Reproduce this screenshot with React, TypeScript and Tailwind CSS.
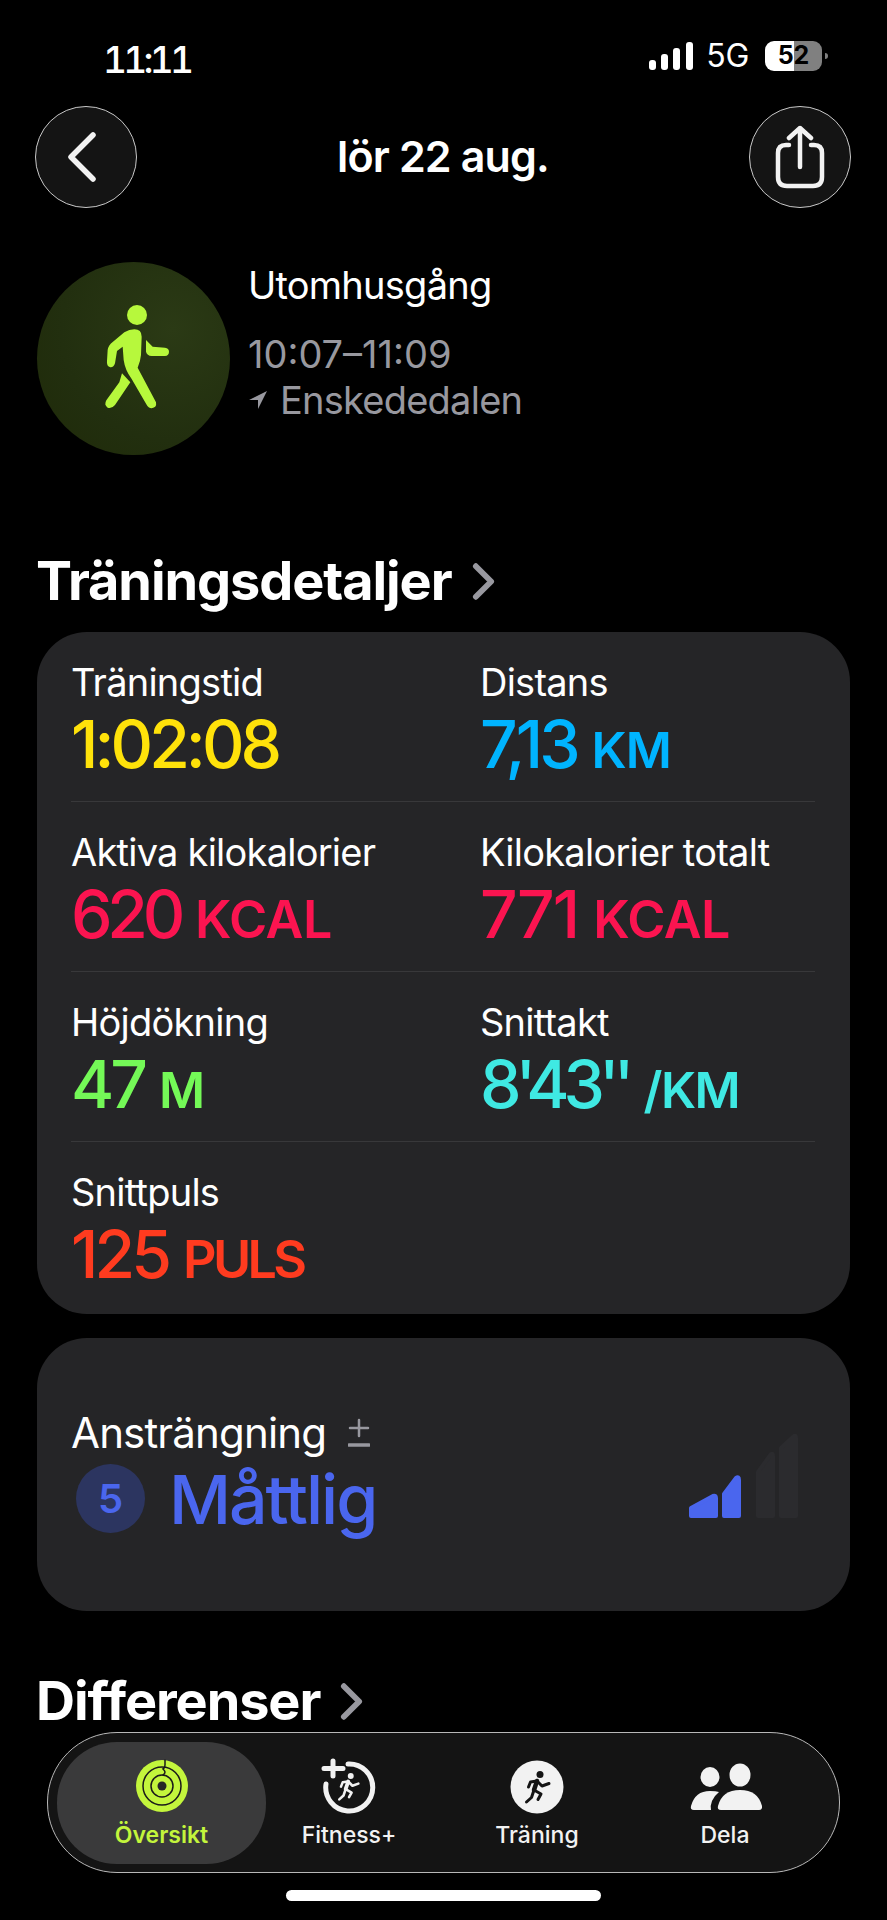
const font = "[font-family:Inter,'Liberation_Sans',sans-serif]";

interface Stat {
  label: string;
  value: string;
  valueClass?: string;
  unit?: string;
  unitClass?: string;
  color: string;
}

const rows: Stat[][] = [
  [
    { label: "Träningstid", value: "1:02:08", color: "text-[#ffe20a]" },
    { label: "Distans", value: "7,13", unit: "KM", unitClass: "text-[50px] tracking-[-0.02em]", color: "text-[#00b4ff]" },
  ],
  [
    { label: "Aktiva kilokalorier", value: "620", valueClass: "tracking-[-0.08em]", unit: "KCAL", color: "text-[#fb1450]" },
    { label: "Kilokalorier totalt", value: "771", valueClass: "tracking-[-0.03em]", unit: "KCAL", color: "text-[#fb1450]" },
  ],
  [
    { label: "Höjdökning", value: "47", unit: "M", unitClass: "text-[50px]", color: "text-[#74f957]" },
    { label: "Snittakt", value: "8'43''", valueClass: "tracking-[-0.09em]", unit: "/KM", unitClass: "text-[50px] tracking-[-0.03em]", color: "text-[#3fe9e3]" },
  ],
  [{ label: "Snittpuls", value: "125", unit: "PULS", unitClass: "text-[52px] tracking-[-0.07em]", color: "text-[#ff3b1f]" }],
];

function StatCell({ stat }: { stat: Stat }) {
  return (
    <div className="w-[409px] shrink-0">
      <div className="text-[38px] leading-[44px] tracking-[-0.02em] text-white">{stat.label}</div>
      <div className={`mt-[9px] flex h-[62px] items-baseline gap-[15px] leading-[62px] ${stat.color}`}>
        <span className={`text-[66px] font-medium ${stat.valueClass ?? "tracking-[-0.06em]"}`}>{stat.value}</span>
        {stat.unit && (
          <span className={`font-semibold ${stat.unitClass ?? "text-[52px] tracking-[-0.01em]"}`}>{stat.unit}</span>
        )}
      </div>
    </div>
  );
}

function Chevron({ className }: { className: string }) {
  return (
    <svg viewBox="0 0 24 38" className={className} fill="none" stroke="#98989f" strokeWidth="6" strokeLinecap="round" strokeLinejoin="round">
      <path d="M4 3 L20 19 L4 35" />
    </svg>
  );
}

function Runner({ color }: { color: string }) {
  return (
    <g fill="none" stroke={color} strokeWidth="3" strokeLinecap="round" strokeLinejoin="round">
      <circle cx="15" cy="3.5" r="3.5" fill={color} stroke="none" />
      <path d="M12 10 L9 19" strokeWidth="4.5" />
      <path d="M12 10 L5.5 11 L3.5 16" />
      <path d="M12 10 L17 15 L24 12.5" />
      <path d="M9 19 L16 23 L13 28.5" />
      <path d="M9 19 L6.5 26.5 L1.5 31" />
    </g>
  );
}

export default function App() {
  return (
    <div className={`relative h-[1920px] w-[887px] overflow-hidden bg-black ${font}`}>
      {/* status bar */}
      <div className="flex h-[106px] items-start justify-between pl-[103px] pr-[59px] pt-[38px]">
        <span className="text-[37px] font-medium tabular-nums leading-[44px] tracking-[-0.1em] text-white">11:11</span>
        <div className="flex items-center pt-[2px]">
          <svg width="44" height="28" viewBox="0 0 44 28" fill="white">
            <rect x="0" y="18" width="7" height="10" rx="3" />
            <rect x="12" y="12" width="7" height="16" rx="3" />
            <rect x="24" y="6" width="7" height="22" rx="3" />
            <rect x="37" y="0" width="7" height="28" rx="3" />
          </svg>
          <span className="ml-[13px] text-[32px] leading-[32px] tracking-[-0.01em] text-white">5G</span>
          <div className="ml-[16px] flex h-[30px] w-[57px] items-center justify-center rounded-[9px] bg-[linear-gradient(90deg,#fff_0,#fff_51%,#808080_51%,#808080_100%)] text-[25px] font-bold text-black">
            52
          </div>
          <div className="ml-[3px] h-[6px] w-[3px] rounded-r-full bg-[#808080]" />
        </div>
      </div>

      {/* nav */}
      <div className="flex h-[101px] items-center justify-between pl-[35px] pr-[36px]">
        <button className="flex h-[102px] w-[102px] items-center justify-center rounded-full border border-[#c8c8c8] bg-[#141414] pr-[8px]">
          <svg width="30" height="50" viewBox="0 0 30 50" fill="none" stroke="#f2f2f2" strokeWidth="5.5" strokeLinecap="round" strokeLinejoin="round">
            <path d="M26 3 L4 25 L26 47" />
          </svg>
        </button>
        <span className="text-[43px] font-semibold tracking-[-0.02em] text-white">lör 22 aug.</span>
        <button className="flex h-[102px] w-[102px] items-center justify-center rounded-full border border-[#c8c8c8] bg-[#141414]">
          <svg width="50" height="64" viewBox="0 0 50 64" fill="none" stroke="#f2f2f2" strokeWidth="4.5" strokeLinecap="round" strokeLinejoin="round">
            <path d="M14 20 H11 Q3 20 3 28 V52 Q3 61 12 61 H38 Q47 61 47 52 V28 Q47 20 39 20 H36" />
            <path d="M25 42 V3 M14 13 L25 3 L36 13" />
          </svg>
        </button>
      </div>

      {/* workout header */}
      <div className="flex gap-[18px] pl-[37px] pt-[55px]">
        <div className="flex h-[193px] w-[193px] shrink-0 items-center justify-center rounded-full bg-[radial-gradient(circle_at_70%_35%,#2b3a15,#222f0f_60%,#1f2a08)] pb-[7px] pl-[4px]">
          <svg width="90" height="120" viewBox="0 0 270 360" fill="#b7f83c">
            <circle cx="138" cy="60" r="30" />
            <path d="M130 103 Q152 103 152 125 L150 180 Q148 200 140 218 L195 322 Q198 338 182 340 Q172 340 166 328 L122 252 Q102 225 98 195 L95 155 L78 168 L72 205 Q68 218 58 217 Q46 214 48 198 L50 165 Q52 150 66 140 L100 112 Q115 103 130 103 Z" />
            <path d="M93 235 L118 262 L72 330 Q62 342 50 338 Q38 330 46 316 L85 262 Z" />
            <path d="M165 135 L185 155 L222 158 Q234 160 234 170 Q234 182 222 183 L182 183 Q168 182 165 170 Z" />
          </svg>
        </div>
        <div className="pt-[1px]">
          <div className="text-[38px] leading-[44px] tracking-[-0.02em] text-white">Utomhusgång</div>
          <div className="mt-[24px] text-[38px] leading-[46px] text-[#98989f]">10:07–11:09</div>
          <div className="flex items-center gap-[12px] text-[38px] leading-[46px] tracking-[-0.02em] text-[#98989f]">
            <svg width="20" height="20" viewBox="0 0 20 20" fill="#98989f">
              <path d="M19 1 L1 10 L10 10 L10 19 Z" />
            </svg>
            Enskededalen
          </div>
        </div>
      </div>

      {/* details */}
      <div className="flex items-center gap-[20px] pl-[36px] pt-[96px]">
        <span className="text-[54px] font-bold leading-[60px] tracking-[-0.02em] text-white">Träningsdetaljer</span>
        <Chevron className="h-[37px] w-[23px]" />
      </div>

      <div className="mx-[37px] mt-[21px] h-[682px] rounded-[50px] bg-[#252527] pl-[34px] pr-[35px]">
        {rows.map((row, i) => (
          <div key={row[0].label} className={`flex h-[170px] pt-[28px] ${i < rows.length - 1 ? "border-b border-[#38383a]" : ""}`}>
            {row.map((stat) => (
              <StatCell key={stat.label} stat={stat} />
            ))}
          </div>
        ))}
      </div>

      {/* effort */}
      <div className="mx-[37px] mt-[24px] flex h-[273px] items-center justify-between rounded-[50px] bg-[#252527] pl-[35px] pr-[50px]">
        <div className="pb-[2px]">
          <div className="-ml-[1px] flex items-center gap-[22px] text-[42px] leading-[44px] tracking-[-0.02em] text-white">
            Ansträngning
            <svg width="22" height="30" viewBox="0 0 22 30" fill="none" stroke="#98989f" strokeWidth="2.5" strokeLinecap="round">
              <path d="M11 2 V18 M2 10 H20" />
              <path d="M1 27 H21" strokeWidth="3.5" />
            </svg>
          </div>
          <div className="mt-[6px] flex items-center gap-[24px] pl-[4px]">
            <div className="flex h-[69px] w-[69px] items-center justify-center rounded-full bg-[#2c3560] text-[40px] font-semibold text-[#4a66ee]">5</div>
            <span className="text-[68px] font-medium leading-[76px] tracking-[-0.03em] text-[#4a66ee]">Måttlig</span>
          </div>
        </div>
        <svg width="111" height="84" viewBox="0 0 111 84" className="mt-[2px]" strokeWidth="4" strokeLinejoin="round">
          <path d="M2 74 L24 62 Q27 61 27 64 V82 H2 Z" fill="#4a66ee" stroke="#4a66ee" />
          <path d="M35 60 L47 44 Q50 42 50 46 V82 H35 Z" fill="#4a66ee" stroke="#4a66ee" />
          <path d="M69 38 L82 20 Q84 19 84 22 V82 H69 Z" fill="#2b2b2e" stroke="#2b2b2e" />
          <path d="M92 14 L105 2 Q107 1 107 4 V82 H92 Z" fill="#2b2b2e" stroke="#2b2b2e" />
        </svg>
      </div>

      {/* differences */}
      <div className="flex items-center gap-[20px] pl-[36px] pt-[60px]">
        <span className="text-[54px] font-bold leading-[60px] tracking-[-0.02em] text-white">Differenser</span>
        <Chevron className="h-[37px] w-[23px]" />
      </div>

      {/* tab bar */}
      <div className="absolute left-[47px] top-[1732px] flex h-[141px] w-[793px] items-center rounded-[70px] border border-[#b8b8b8] bg-[#141414] pl-[9px] pr-[10px]">
        <div className="flex h-[122px] w-[209px] flex-col items-center rounded-[60px] bg-[#3a3a3b] pt-[9px]">
          <svg width="70" height="70" viewBox="0 0 70 70">
            <circle cx="35" cy="35" r="26" fill="#c3f53c" />
            <g fill="none" stroke="#1a1a1a" strokeWidth="1.5" strokeLinecap="round">
              <circle cx="35" cy="35" r="19" />
              <circle cx="35" cy="35" r="11" />
              <path d="M38 9 V14 Q38 17 36 18 Q38 20 38 21 Q38 23 36 24" />
            </g>
            <circle cx="35" cy="35" r="4.5" fill="#262626" />
          </svg>
          <span className="-mt-[1px] text-[23px] font-semibold leading-[30px] text-[#c3f53c]">Översikt</span>
        </div>

        <div className="flex w-[166px] flex-col items-center pb-[5px] text-[#f2f2f2]">
          <svg width="70" height="70" viewBox="0 0 70 70" fill="none">
            <g transform="translate(-4 0)">
              <path d="M38 13 A23.5 23.5 0 1 1 16 33" stroke="#f2f2f2" strokeWidth="5" strokeLinecap="round" />
              <path d="M23 10 V25 M14 17.5 H33" stroke="#f2f2f2" strokeWidth="5" strokeLinecap="round" />
            </g>
            <g transform="translate(24 22) scale(0.85)">
              <Runner color="#f2f2f2" />
            </g>
          </svg>
          <span className="-mt-[1px] text-[23px] font-medium leading-[30px]">Fitness+</span>
        </div>

        <div className="ml-[22px] flex w-[166px] flex-col items-center pb-[5px] text-[#f2f2f2]">
          <svg width="70" height="70" viewBox="0 0 70 70">
            <circle cx="35" cy="36" r="26.5" fill="#f2f2f2" />
            <g transform="translate(23 20)">
              <Runner color="#141414" />
            </g>
          </svg>
          <span className="-mt-[1px] text-[23px] font-medium leading-[30px]">Träning</span>
        </div>

        <div className="ml-[22px] flex w-[166px] flex-col items-center pb-[5px] text-[#f2f2f2]">
          <svg width="70" height="70" viewBox="0 0 70 70" fill="#f2f2f2" className="overflow-visible">
            <ellipse cx="20" cy="26" rx="9.5" ry="10" />
            <ellipse cx="50" cy="24" rx="10.5" ry="11.5" />
            <path d="M50 39 Q68 39 72 55 Q72.5 59 69 59 H31 Q27 59 28 55 Q32 39 50 39 Z" />
            <path d="M20 40 Q26 40 29 41 Q24 45 22 50 Q20 55 21 59 H4 Q0 59 1 55 Q5 40 20 40 Z" />
          </svg>
          <span className="-mt-[1px] text-[23px] font-medium leading-[30px]">Dela</span>
        </div>
      </div>

      {/* home indicator */}
      <div className="absolute left-[286px] top-[1890px] h-[11px] w-[315px] rounded-full bg-white" />
    </div>
  );
}
